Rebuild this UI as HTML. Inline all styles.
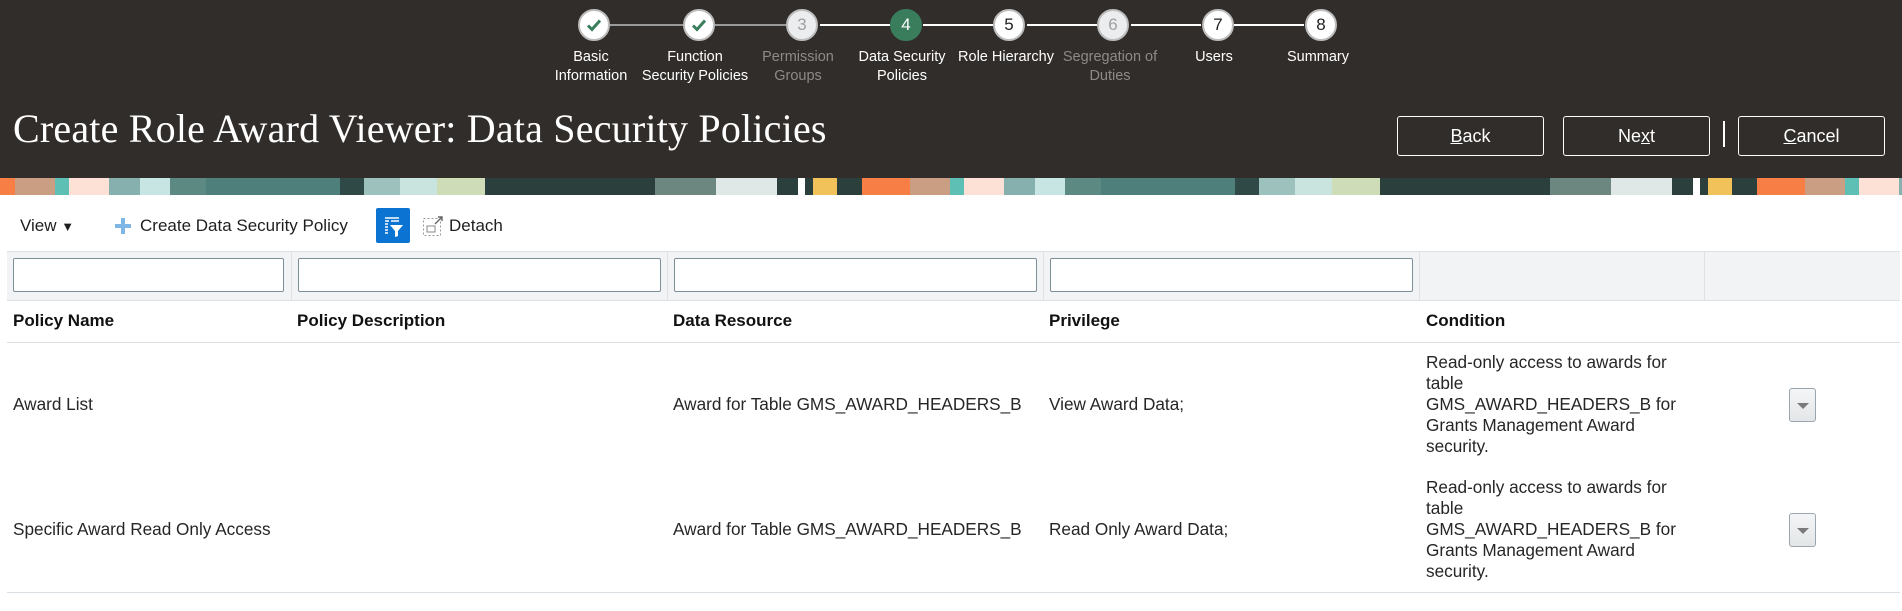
<!DOCTYPE html>
<html><head><meta charset="utf-8"><style>
*{margin:0;padding:0;box-sizing:border-box}
body{width:1902px;height:611px;overflow:hidden;background:#fff;font-family:"Liberation Sans",Arial,sans-serif;color:#1f1f1f;position:relative}
.hdr{position:absolute;left:0;top:0;width:1902px;height:178px;background:#312d2a}
.ban{position:absolute;left:0;top:178px;width:1902px;height:17px;background-image:linear-gradient(90deg,#c99e83 0 40px,#5ebfb5 40px 54px,#fde0d6 54px 94px,#86b0ad 94px 125px,#c6e5e3 125px 155px,#5c8a83 155px 191px,#4f7f7a 191px 325px,#2f4a46 325px 349px,#9dc1bd 349px 385px,#c9e3df 385px 422px,#cfdcb8 422px 470px,#2b3f3c 470px 640px,#6b8780 640px 701px,#dfe8e6 701px 762px,#2b3f3c 762px 783px,#fff 783px 790px,#2b3f3c 790px 798px,#f2c25a 798px 822px,#2b3f3c 822px 847px,#f77f46 847px 895px);background-size:895px 17px;background-position:15px 0;background-repeat:repeat-x}
.c{position:absolute;top:9px;width:32px;height:32px;border-radius:50%;background:#fff;border:2px solid #bdbdbd;text-align:center;line-height:28px;font-size:17px;color:#222}
.c.dis{background:#ebedee;color:#a0a0a0}
.c.cur{background:#3a7d5d;border-color:#3a7d5d;color:#fff}
.ln{position:absolute;top:24px;height:2px;background:#fff}
.ln.g{background:#9a9a9a}
.lb{position:absolute;top:48px;width:120px;margin-left:-60px;text-align:center;font-size:14.5px;line-height:19px;color:#fff}
.lb.dis{color:#8d8a87}
.title{position:absolute;left:13px;top:105px;font-family:"Liberation Serif",serif;font-size:40px;color:#fff;letter-spacing:0.2px}
.btn{position:absolute;top:116px;height:40px;border:1px solid #fff;border-radius:3px;color:#fff;font-size:18px;text-align:center;line-height:38px}
.tb{position:absolute;top:216px;font-size:17px;color:#1f1f1f}
.frow{position:absolute;left:7px;top:251px;width:1893px;height:50px;background:#f1f3f4;border-top:1px solid #dde2e5;border-bottom:1px solid #dde2e5}
.inp{position:absolute;top:258px;height:34px;background:#fff;border:1px solid #7d8f98;border-radius:2px}
.vs{position:absolute;top:252px;width:1px;height:48px;background:#dde2e5}
.th{position:absolute;top:311px;font-size:17px;font-weight:bold;color:#111}
.td{position:absolute;font-size:17.2px;color:#262626;line-height:21px}
.hl{position:absolute;left:7px;width:1893px;height:1px;background:#d9dfe3}
.dd{position:absolute;left:1789px;width:27px;height:34px;border:1px solid #9aa5ad;border-radius:3px;background:linear-gradient(#f4f5f6,#e3e6e8)}
.dd:after{content:"";position:absolute;left:7px;top:14px;border-left:6px solid transparent;border-right:6px solid transparent;border-top:6px solid #7a7a7a}
</style></head><body>
<div class="hdr">
<div class="ln g" style="left:610px;width:88px"></div>
<div class="ln g" style="left:715px;width:88px"></div>
<div class="ln" style="left:820px;width:70px"></div>
<div class="ln" style="left:923px;width:70px"></div>
<div class="ln" style="left:1027px;width:70px"></div>
<div class="ln" style="left:1131px;width:70px"></div>
<div class="ln" style="left:1234px;width:70px"></div>
<div class="c" style="left:578px"><svg width="28" height="28" viewBox="0 0 28 28"><path d="M8 14.5l4 4 8-9" fill="none" stroke="#3a7d5d" stroke-width="3"/></svg></div>
<div class="c" style="left:683px"><svg width="28" height="28" viewBox="0 0 28 28"><path d="M8 14.5l4 4 8-9" fill="none" stroke="#3a7d5d" stroke-width="3"/></svg></div>
<div class="c dis" style="left:786px">3</div>
<div class="c cur" style="left:890px">4</div>
<div class="c" style="left:993px">5</div>
<div class="c dis" style="left:1097px">6</div>
<div class="c" style="left:1202px">7</div>
<div class="c" style="left:1305px">8</div>
<div class="lb" style="left:591px">Basic<br>Information</div>
<div class="lb" style="left:695px">Function<br>Security Policies</div>
<div class="lb dis" style="left:798px">Permission<br>Groups</div>
<div class="lb" style="left:902px">Data Security<br>Policies</div>
<div class="lb" style="left:1006px">Role Hierarchy</div>
<div class="lb dis" style="left:1110px">Segregation of<br>Duties</div>
<div class="lb" style="left:1214px">Users</div>
<div class="lb" style="left:1318px">Summary</div>
<div class="title">Create Role Award Viewer: Data Security Policies</div>
<div class="btn" style="left:1397px;width:147px"><u>B</u>ack</div>
<div class="btn" style="left:1563px;width:147px">Ne<u>x</u>t</div>
<div style="position:absolute;left:1723px;top:121px;width:2px;height:26px;background:#fff"></div>
<div class="btn" style="left:1738px;width:147px"><u>C</u>ancel</div>
</div>
<div class="ban"></div>
<div class="tb" style="left:20px">View <span style="font-size:13px">▼</span></div>
<svg style="position:absolute;left:114px;top:217px" width="18" height="18" viewBox="0 0 18 18"><path d="M9 1v16M1 9h16" stroke="#7fb6e6" stroke-width="4"/></svg>
<div class="tb" style="left:140px">Create Data Security Policy</div>
<div style="position:absolute;left:376px;top:208px;width:34px;height:35px;background:#0b74d3;border-radius:2px"><svg width="34" height="35" viewBox="0 0 34 35"><path d="M9 10h14M9 13h4M15 13h8M9 16h3M9 19h3M9 22h3M9 25h3" stroke="#fff" stroke-width="1.6"/><path d="M14 17h13l-5 6v5l-3 1v-6z" fill="#fff"/></svg></div>
<svg style="position:absolute;left:422px;top:215px" width="22" height="22" viewBox="0 0 22 22"><rect x="1.5" y="3.5" width="17" height="17" fill="none" stroke="#999" stroke-dasharray="2 2"/><rect x="5" y="11" width="8" height="6" fill="none" stroke="#888"/><path d="M13 9l7-7M16 2h4v4" stroke="#666" fill="none" stroke-width="1.4"/></svg>
<div class="tb" style="left:449px">Detach</div>
<div class="frow"></div>
<div class="vs" style="left:291px"></div><div class="vs" style="left:667px"></div><div class="vs" style="left:1043px"></div><div class="vs" style="left:1419px"></div><div class="vs" style="left:1704px"></div>
<div class="inp" style="left:13px;width:271px"></div>
<div class="inp" style="left:298px;width:363px"></div>
<div class="inp" style="left:674px;width:363px"></div>
<div class="inp" style="left:1050px;width:363px"></div>
<div class="th" style="left:13px">Policy Name</div>
<div class="th" style="left:297px">Policy Description</div>
<div class="th" style="left:673px">Data Resource</div>
<div class="th" style="left:1049px">Privilege</div>
<div class="th" style="left:1426px">Condition</div>
<div class="hl" style="top:342px"></div>
<div class="td" style="left:13px;top:394px">Award List</div>
<div class="td" style="left:673px;top:394px">Award for Table GMS_AWARD_HEADERS_B</div>
<div class="td" style="left:1049px;top:394px">View Award Data;</div>
<div class="td" style="left:1426px;top:352px">Read-only access to awards for<br>table<br>GMS_AWARD_HEADERS_B for<br>Grants Management Award<br>security.</div>
<div class="dd" style="top:388px"></div>
<div class="td" style="left:13px;top:519px">Specific Award Read Only Access</div>
<div class="td" style="left:673px;top:519px">Award for Table GMS_AWARD_HEADERS_B</div>
<div class="td" style="left:1049px;top:519px">Read Only Award Data;</div>
<div class="td" style="left:1426px;top:477px">Read-only access to awards for<br>table<br>GMS_AWARD_HEADERS_B for<br>Grants Management Award<br>security.</div>
<div class="dd" style="top:513px"></div>
<div class="hl" style="top:592px"></div>
</body></html>
